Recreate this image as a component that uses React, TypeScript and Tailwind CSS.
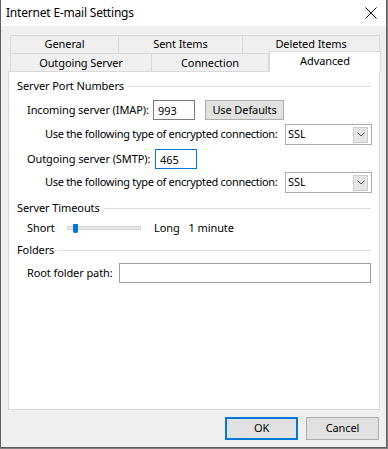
import { useState } from "react";

const font = { fontFamily: '"Noto Sans", "Segoe UI", sans-serif' };

function GroupHeader({ title, mt }: { title: string; mt: string }) {
    return (
        <div className={`flex flex-row items-center h-[16px] pl-[8px] pr-[8px] ${mt}`}>
            <span className="whitespace-nowrap">{title}</span>
            <div className="flex-1 h-px bg-[#dcdcdc] ml-[4px]" />
        </div>
    );
}

function Combo({ value }: { value: string }) {
    return (
        <div className="w-[87px] h-[21px] border border-[#adadad] bg-white flex flex-row items-center pl-[2px] pr-[3px]">
            <span className="flex-1">{value}</span>
            <div className="w-[15px] h-[16px] bg-[#e5e5e5] border border-[#cccccc] flex items-center justify-center">
                <svg width="8" height="5" viewBox="0 0 8 5">
                    <path d="M0.5 0.5 L4 4 L7.5 0.5" fill="none" stroke="#606060" strokeWidth="1" />
                </svg>
            </div>
        </div>
    );
}

export default function App() {
    const [imap, setImap] = useState("993");
    const [smtp, setSmtp] = useState("465");

    return (
        <div className="w-[388px] h-[449px] bg-[#808080] text-[11px] tracking-[-0.1px] text-black" style={font}>
            <div className="w-[387px] h-[448px] bg-[#f0f0f0] border-l border-r border-b border-[#5f5f5f] flex flex-col">
                {/* title bar */}
                <div className="h-[26px] bg-white flex flex-row items-center justify-between pl-[5px] pr-[9px]">
                    <span className="text-[12px] tracking-[-0.2px]">Internet E-mail Settings</span>
                    <svg width="12" height="12" viewBox="0 0 12 12">
                        <path d="M0.5 0.5 L11.5 11.5 M11.5 0.5 L0.5 11.5" stroke="#111" strokeWidth="1" />
                    </svg>
                </div>

                {/* tabs */}
                <div className="flex flex-col pl-[9px] mt-[9px]">
                    <div className="flex flex-row">
                        <div className="w-[109px] h-[19px] border border-[#d9d9d9] flex items-center justify-center">General</div>
                        <div className="w-[124px] h-[19px] border border-[#d9d9d9] border-l-0 flex items-center justify-center">Sent Items</div>
                        <div className="w-[137px] h-[19px] border border-[#d9d9d9] border-l-0 flex items-center justify-center">Deleted Items</div>
                    </div>
                    <div className="flex flex-row -mt-px h-[18px] relative z-10">
                        <div className="w-[142px] h-[19px] border border-[#d9d9d9] border-b-0 flex items-center justify-center">Outgoing Server</div>
                        <div className="w-[117px] h-[19px] border border-[#d9d9d9] border-l-0 border-b-0 flex items-center justify-center">Connection</div>
                        <div className="w-[112px] h-[21px] -mt-[2px] border border-[#d9d9d9] border-b-0 bg-white flex items-start justify-center pt-[1px]">Advanced</div>
                    </div>
                </div>

                {/* panel */}
                <div className="ml-[7px] w-[372px] h-[339px] bg-white border border-[#d9d9d9] flex flex-col">
                    <GroupHeader title="Server Port Numbers" mt="mt-[6px]" />

                    <div className="flex flex-row items-center h-[20px] mt-[6px] pl-[18px]">
                        <span className="w-[126px] whitespace-nowrap">Incoming server (IMAP):</span>
                        <input
                            value={imap}
                            onChange={(e) => setImap(e.target.value)}
                            className="w-[42px] h-[20px] border border-[#7a7a7a] px-[4px] outline-none"
                        />
                        <button className="ml-[10px] w-[79px] h-[20px] bg-[#e1e1e1] border border-[#adadad]">
                            Use Defaults
                        </button>
                    </div>

                    <div className="flex flex-row items-center justify-between h-[21px] mt-[4px] pl-[36px] pr-[7px]">
                        <span className="whitespace-nowrap tracking-[-0.3px]">Use the following type of encrypted connection:</span>
                        <Combo value="SSL" />
                    </div>

                    <div className="flex flex-row items-center h-[20px] mt-[4px] pl-[18px]">
                        <span className="w-[128px] whitespace-nowrap">Outgoing server (SMTP):</span>
                        <input
                            value={smtp}
                            onChange={(e) => setSmtp(e.target.value)}
                            className="w-[42px] h-[20px] border border-[#0078d7] px-[4px] outline-none"
                        />
                    </div>

                    <div className="flex flex-row items-center justify-between h-[21px] mt-[3px] pl-[36px] pr-[7px]">
                        <span className="whitespace-nowrap tracking-[-0.3px]">Use the following type of encrypted connection:</span>
                        <Combo value="SSL" />
                    </div>

                    <GroupHeader title="Server Timeouts" mt="mt-[7px]" />

                    <div className="flex flex-row items-center h-[16px] mt-[4px] pl-[18px]">
                        <span className="w-[40px]">Short</span>
                        <div className="w-[74px] h-[4px] bg-[#e7e7e7] border border-[#d6d6d6] relative">
                            <div className="absolute left-[5px] -top-[3px] w-[5px] h-[9px] bg-[#0078d7] rounded-b-[2px]" />
                        </div>
                        <span className="ml-[13px]">Long</span>
                        <span className="ml-[9px]">1 minute</span>
                    </div>

                    <GroupHeader title="Folders" mt="mt-[6px]" />

                    <div className="flex flex-row items-center h-[20px] mt-[5px] pl-[18px] pr-[8px]">
                        <span className="w-[92px] whitespace-nowrap">Root folder path:</span>
                        <input className="flex-1 h-[20px] border border-[#a0a0a0] px-[4px] outline-none" />
                    </div>
                </div>

                {/* buttons */}
                <div className="flex flex-row justify-end gap-[8px] mt-[7px] pr-[7px]">
                    <button className="w-[73px] h-[23px] bg-[#e1e1e1] border-2 border-[#0078d7]">OK</button>
                    <button className="w-[73px] h-[23px] bg-[#e1e1e1] border border-[#adadad]">Cancel</button>
                </div>
            </div>
        </div>
    );
}
